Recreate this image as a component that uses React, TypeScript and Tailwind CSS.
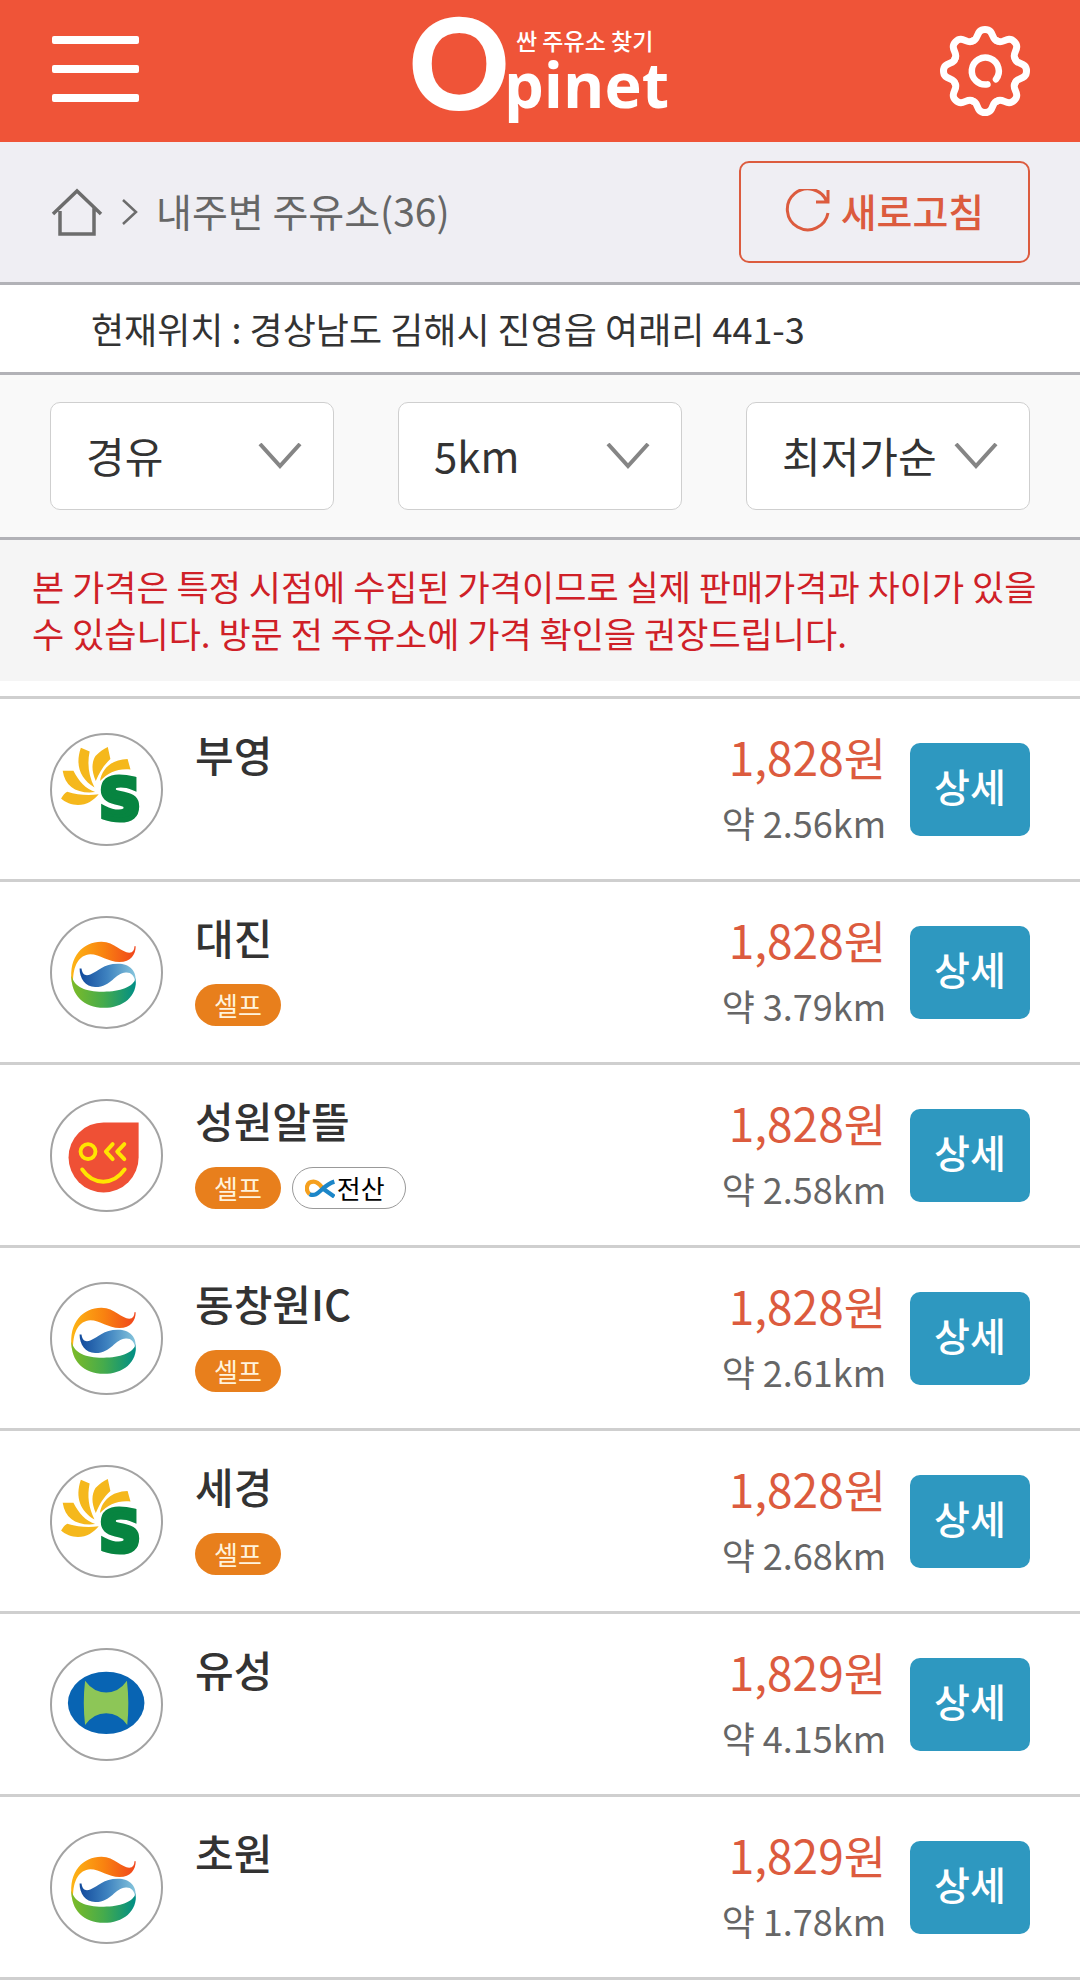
import { useState } from "react";

type Brand = "soil" | "gs" | "alddle" | "nh";

interface Station {
  name: string;
  brand: Brand;
  price: string;
  distance: string;
  self?: boolean;
  computerized?: boolean;
}

const STATIONS: Station[] = [
  { name: "부영", brand: "soil", price: "1,828", distance: "2.56" },
  { name: "대진", brand: "gs", price: "1,828", distance: "3.79", self: true },
  { name: "성원알뜰", brand: "alddle", price: "1,828", distance: "2.58", self: true, computerized: true },
  { name: "동창원IC", brand: "gs", price: "1,828", distance: "2.61", self: true },
  { name: "세경", brand: "soil", price: "1,828", distance: "2.68", self: true },
  { name: "유성", brand: "nh", price: "1,829", distance: "4.15" },
  { name: "초원", brand: "gs", price: "1,829", distance: "1.78" },
];

const GEAR_ANGLES = [0, 45, 90, 135, 180, 225, 270, 315];

function GearIcon() {
  return (
    <svg viewBox="-45 -45 90 90" className="size-[90px]" fill="none" stroke="#fff" strokeWidth="7" strokeLinecap="round">
      {GEAR_ANGLES.map((angle) => (
        <path
          key={angle}
          d="M-12.4-30C-6-31-9.5-41.5 0-41.5C9.5-41.5 6-31 12.4-30"
          transform={`rotate(${angle})`}
        />
      ))}
      <path d="M11 8.3A13.5 13.5 0 1 0 2.5 13.4" strokeWidth="6.5" />
    </svg>
  );
}

function Logo() {
  return (
    <svg viewBox="-10 0 280 142" className="w-[280px] h-[142px] overflow-visible" fill="#fff">
      <text x="-1" y="109" fontSize="124" fontWeight="700" stroke="#fff" strokeWidth="2" fontFamily="Lato, sans-serif">
        O
      </text>
      <text x="94" y="108" fontSize="63" fontWeight="700" fontFamily="'Open Sans', 'Noto Sans', sans-serif">
        pinet
      </text>
      <text x="106" y="50" fontSize="23" fontWeight="500" fontFamily="'Noto Sans CJK KR', sans-serif">
        싼 주유소 찾기
      </text>
    </svg>
  );
}

function SoilMark() {
  return (
    <svg viewBox="32 40 336 336" className="size-full">
      <g fill="#f5b81c">
        <path d="M60 236C66 226 72 218 79 215C110 224 140 228 176 223C160 242 140 256 112 256C92 256 74 248 60 236Z" />
        <path d="M65 150H98C116 185 135 204 165 216C110 222 72 200 65 150Z" />
        <path d="M121 79L148 91C140 130 145 165 163 202C120 175 102 135 121 79Z" />
        <path d="M166 105C178 92 190 84 204 77L212 114C190 135 178 155 167 182C153 150 154 125 166 105Z" />
        <path d="M265 114L274 146C235 142 205 155 180 182C185 145 215 115 265 114Z" />
      </g>
      <text
        x="178"
        y="301"
        fontSize="178"
        fontWeight="700"
        fontFamily="'DejaVu Sans', sans-serif"
        fill="#078440"
        stroke="#078440"
        strokeWidth="16"
      >
        S
      </text>
    </svg>
  );
}

function GsMark() {
  return (
    <svg viewBox="32 48 336 336" className="size-full">
      <defs>
        <linearGradient id="gs-top">
          <stop offset="0" stopColor="#fdb515" />
          <stop offset="0.5" stopColor="#f98310" />
          <stop offset="1" stopColor="#f0451c" />
        </linearGradient>
        <linearGradient id="gs-mid">
          <stop offset="0" stopColor="#124a9c" />
          <stop offset="0.5" stopColor="#3f83c0" />
          <stop offset="1" stopColor="#86c5dc" />
        </linearGradient>
        <linearGradient id="gs-low">
          <stop offset="0" stopColor="#7dbb27" />
          <stop offset="0.5" stopColor="#45ab4c" />
          <stop offset="1" stopColor="#008e86" />
        </linearGradient>
      </defs>
      <path
        fill="url(#gs-top)"
        d="M93 245C82 165 130 120 185 121C225 122 248 155 270 155C282 155 286 145 286 135H290C290 160 275 184 240 184C205 184 180 160 150 160C115 162 97 195 97 245Z"
      />
      <path
        fill="url(#gs-low)"
        d="M92 225C100 262 140 276 192 275C240 274 284 262 290 232C297 290 250 325 192 325C130 325 90 285 92 225Z"
      />
      <path
        fill="url(#gs-mid)"
        d="M117 204H123C125 222 135 228 150 222C175 212 190 189 235 189C272 189 295 212 289 248C287 225 275 215 260 216C225 217 215 262 165 261C135 260 117 235 117 204Z"
      />
    </svg>
  );
}

function AlddleMark() {
  return (
    <svg viewBox="32 57 336 336" className="size-full">
      <path fill="#ef5035" d="M191 123H299V231A108 108 0 1 1 191 123Z" />
      <g fill="none" stroke="#ffe500" strokeWidth="12" strokeLinecap="round" strokeLinejoin="round">
        <circle cx="143" cy="213" r="23" />
        <path d="M219 190L198 213L219 236M255 190L233 213L255 236M125 268Q150 305 190 306Q230 305 256 268" />
      </g>
    </svg>
  );
}

function NhMark() {
  return (
    <svg viewBox="32 24 336 336" className="size-full">
      <ellipse cx="199" cy="187" rx="118" ry="96" fill="#0864b3" />
      <path
        fill="#8dc657"
        d="M134 119Q160 155 199 155Q238 155 263 119Q271 187 264 255Q238 219 199 219Q160 219 134 255Q126 187 134 119Z"
      />
    </svg>
  );
}

const MARKS: Record<Brand, () => React.JSX.Element> = {
  soil: SoilMark,
  gs: GsMark,
  alddle: AlddleMark,
  nh: NhMark,
};

function FilterSelect({ label, options }: { label: string; options: string[] }) {
  return (
    <div className="relative">
      <select
        aria-label={label}
        className="appearance-none w-full h-[108px] pl-[35px] pr-4 pb-1 rounded-[10px] border border-[#cfcfcf] bg-white text-[42px] text-[#333] outline-none"
      >
        {options.map((option) => (
          <option key={option}>{option}</option>
        ))}
      </select>
      <svg
        viewBox="0 0 44 26"
        className="absolute right-8 top-[41px] w-11 h-[26px] pointer-events-none"
        fill="none"
        stroke="#858585"
        strokeWidth="4"
      >
        <path d="M2 1L22 23L42 1" />
      </svg>
    </div>
  );
}

function StationRow({ station }: { station: Station }) {
  const Mark = MARKS[station.brand];

  return (
    <li className="flex items-center h-[183px] px-[50px] border-t-[3px] border-[#cfcfcf]">
      <div className="size-[113px] shrink-0 rounded-full border-2 border-[#a3a3a3] overflow-hidden">
        <Mark />
      </div>
      <div className="flex-1 self-stretch pl-8 pt-[25px]">
        <h2 className="text-[42px] leading-[60px] font-medium text-[#333]">{station.name}</h2>
        <div className="flex gap-[11px] mt-[17px] text-[26px] leading-none">
          {station.self && (
            <span className="flex items-center h-[42px] px-[19px] rounded-full bg-[#e87f1c] text-[#fff3dc]">셀프</span>
          )}
          {station.computerized && (
            <span className="flex items-center gap-[2px] h-[42px] pl-3 pr-5 rounded-full border border-[#999] bg-white text-black">
              <svg viewBox="792 296 92 58" className="w-[30px] h-[19px]" fill="none" strokeWidth="13">
                <path d="M806 342C792 330 796 304 818 304C832 304 838 314 846 324" stroke="#f5a01e" />
                <path d="M806 342C832 356 842 316 882 304M842 322L882 350" stroke="#1c86c8" />
              </svg>
              전산
            </span>
          )}
        </div>
      </div>
      <div className="text-right mr-6 whitespace-nowrap">
        <p className="text-[46px] leading-[66px] text-[#dc5b3e]">{station.price}원</p>
        <p className="text-[36px] leading-[66px] text-[#666]">약 {station.distance}km</p>
      </div>
      <button
        type="button"
        className="w-[120px] h-[93px] pb-2 shrink-0 rounded-[10px] bg-[#2e98c0] text-white text-[39px] font-medium"
      >
        상세
      </button>
    </li>
  );
}

export default function App() {
  const [stations] = useState(STATIONS);

  return (
    <div className="bg-white font-['Noto_Sans_CJK_KR',sans-serif]">
      <header className="flex items-center justify-between h-[142px] pl-[52px] pr-[50px] bg-[#ef5438]">
        <button type="button" aria-label="메뉴" className="flex flex-col gap-[21px] w-[87px] pb-1">
          <span className="w-full h-2 rounded-xs bg-white" />
          <span className="w-full h-2 rounded-xs bg-white" />
          <span className="w-full h-2 rounded-xs bg-white" />
        </button>
        <a href="#" aria-label="Opinet 싼 주유소 찾기">
          <Logo />
        </a>
        <button type="button" aria-label="설정">
          <GearIcon />
        </button>
      </header>

      <nav className="flex items-center justify-between h-[143px] pl-[51px] pr-[50px] bg-[#efeef3] border-b-[3px] border-[#b2b2b7]">
        <div className="flex items-center text-[#666]">
          <a href="#" aria-label="홈">
            <svg viewBox="0 0 52 50" className="w-[52px] h-[50px]" fill="none" stroke="#6c6c6c" strokeWidth="3.5">
              <path d="M2 27L26 4L50 27M9 24V47H43V20" />
            </svg>
          </a>
          <svg viewBox="0 0 16 26" className="w-4 h-[26px] ml-[19px]" fill="none" stroke="#6c6c6c" strokeWidth="2.5">
            <path d="M1 1L14 13L1 25" />
          </svg>
          <h1 className="ml-[18px] pb-1 text-[39px]">내주변 주유소(36)</h1>
        </div>
        <button
          type="button"
          className="flex items-center justify-center gap-[10px] w-[291px] h-[102px] rounded-[10px] border-2 border-[#dc5b3e] text-[#dc5b3e] text-[39px] font-medium"
        >
          <svg viewBox="0 0 46 46" className="w-[46px] h-[46px]" fill="none" stroke="currentColor" strokeWidth="3">
            <path d="M43 24A20.5 20.5 0 1 1 42 13M43 1V13H31" />
          </svg>
          <span className="pb-1">새로고침</span>
        </button>
      </nav>

      <p className="h-[90px] pl-[91px] text-[36px] leading-[86px] text-[#333] border-b-[3px] border-[#b2b2b7]">
        현재위치 : 경상남도 김해시 진영읍 여래리 441-3
      </p>

      <form className="grid grid-cols-3 gap-16 px-[50px] py-[27px] bg-[#f9f9f9] border-b-[3px] border-[#b2b2b7]">
        <FilterSelect label="유종" options={["경유", "휘발유", "고급휘발유", "LPG"]} />
        <FilterSelect label="반경" options={["5km", "3km", "1km"]} />
        <FilterSelect label="정렬" options={["최저가순", "거리순"]} />
      </form>

      <p className="px-8 pt-[22px] pb-[25px] mb-[15px] bg-[#f5f5f5] text-[35px] leading-[47px] text-[#cf2027]">
        본 가격은 특정 시점에 수집된 가격이므로 실제 판매가격과 차이가 있을 수 있습니다. 방문 전 주유소에 가격 확인을
        권장드립니다.
      </p>

      <ul className="border-b-[3px] border-[#cfcfcf]">
        {stations.map((station) => (
          <StationRow key={station.name} station={station} />
        ))}
      </ul>
    </div>
  );
}
